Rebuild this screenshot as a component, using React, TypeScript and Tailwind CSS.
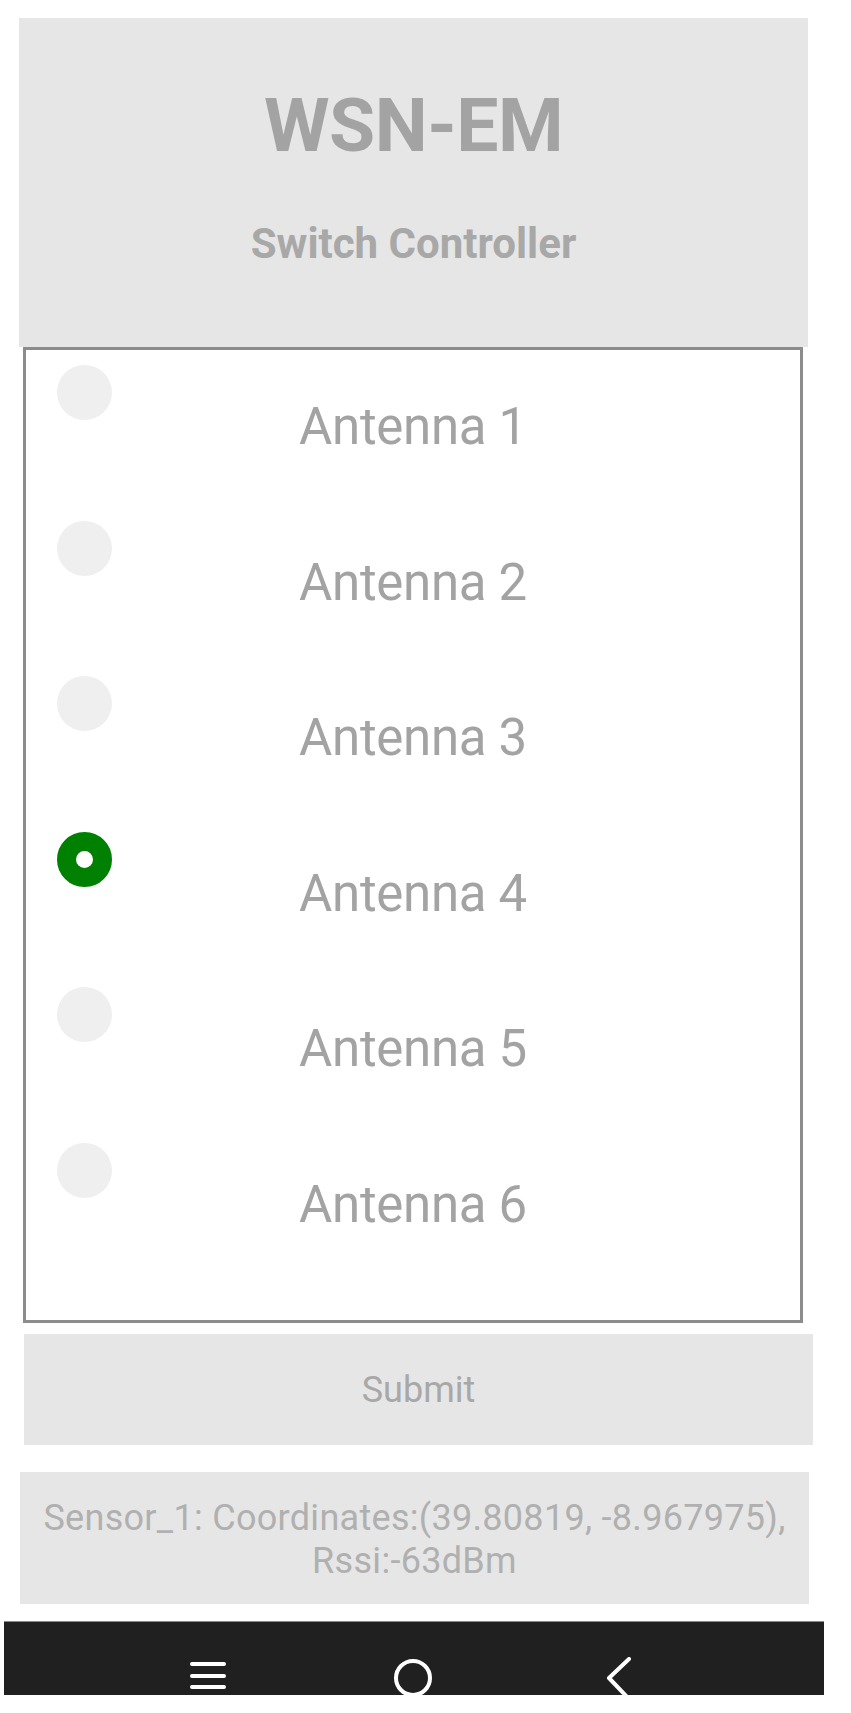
import React, { useState } from 'react';

const antennas = ['Antenna 1', 'Antenna 2', 'Antenna 3', 'Antenna 4', 'Antenna 5', 'Antenna 6'];

const MenuIcon = () => (
  <svg width="38" height="30" viewBox="0 0 38 30" fill="none" stroke="white" strokeWidth="4" strokeLinecap="round">
    <line x1="3" y1="2" x2="35" y2="2" />
    <line x1="3" y1="14" x2="35" y2="14" />
    <line x1="3" y1="25" x2="35" y2="25" />
  </svg>
);

const HomeIcon = () => (
  <svg width="40" height="40" viewBox="0 0 40 40" fill="none" stroke="white" strokeWidth="4">
    <circle cx="20" cy="20" r="17" />
  </svg>
);

const BackIcon = () => (
  <svg width="26" height="46" viewBox="0 0 26 46" fill="none" stroke="white" strokeWidth="4" strokeLinecap="round" strokeLinejoin="round">
    <polyline points="23,2 3,21 23,42" />
  </svg>
);

export default function App() {
  const [selected, setSelected] = useState(3);

  return (
    <div className="w-[851px] min-h-[1713px] bg-white pt-[18px] font-['Roboto',sans-serif]">
      {/* header */}
      <div className="ml-[19px] w-[789px] h-[329px] bg-[#e6e6e6] flex flex-col items-center pt-[70px]">
        <h1 className="text-[75px] leading-none font-bold tracking-[-0.5px] text-[#a3a3a3]">WSN-EM</h1>
        <h2 className="mt-[60px] text-[42px] leading-none font-bold text-[#a8a8a8]">Switch Controller</h2>
      </div>

      {/* antenna list */}
      <div className="ml-[23px] w-[780px] border-[3px] border-[#8c8c8c] pb-[37px]">
        {antennas.map((name, i) => (
          <label key={name} className="grid grid-cols-[110px_1fr_110px] h-[155.5px] cursor-pointer">
            <input
              type="radio"
              name="antenna"
              checked={selected === i}
              onChange={() => setSelected(i)}
              className="appearance-none ml-[31px] mt-[15px] w-[55px] h-[55px] rounded-full bg-[#efefef] checked:bg-white checked:border-[19px] checked:border-[#008000] outline-none"
            />
            <span className="mt-[51px] text-center text-[51px] leading-none tracking-[-0.3px] text-[#a3a3a3]">{name}</span>
            <span />
          </label>
        ))}
      </div>

      <button className="mt-[11px] ml-[24px] w-[789px] h-[111px] bg-[#e6e6e6] flex items-center justify-center text-[36px] text-[#a8a8a8]">
        Submit
      </button>

      <div className="mt-[27px] ml-[20px] w-[789px] h-[132px] bg-[#e6e6e6] pt-[25px] text-center text-[36px] leading-[43px] tracking-[0.3px] text-[#b0b0b0]">
        Sensor_1: Coordinates:(39.80819, -8.967975),
        <br />
        Rssi:-63dBm
      </div>

      {/* android nav bar */}
      <div className="mt-[17px] ml-[4px] w-[820px] h-[74px] bg-[#202020] border-t border-[#8a8a8a] overflow-hidden flex items-start">
        <div className="ml-[185px] mt-[40px]">
          <MenuIcon />
        </div>
        <div className="ml-[166px] mt-[36px]">
          <HomeIcon />
        </div>
        <div className="ml-[173px] mt-[35px]">
          <BackIcon />
        </div>
      </div>
    </div>
  );
}
